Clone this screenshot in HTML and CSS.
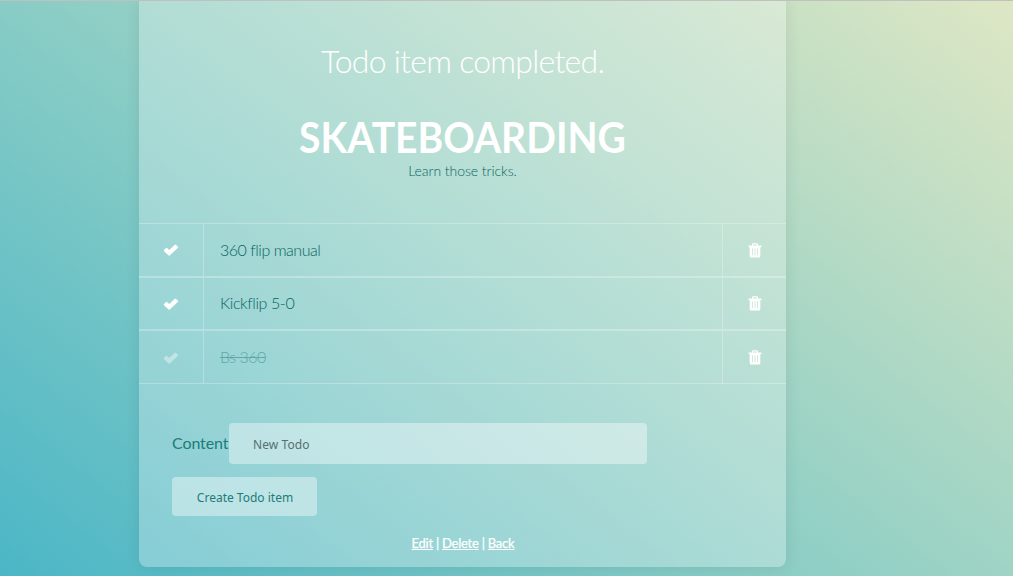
FILE: index.html
```html
<!DOCTYPE html>
<html lang="en">
<head>
<meta charset="utf-8">
<title>Skateboarding</title>
<link rel="stylesheet" href="styles.css">
</head>
<body>
<svg width="0" height="0" class="defs">
  <symbol id="check" viewBox="0 0 16 12"><path d="M1 6 L3 4 Q3.5 3.6 4 4 L6.2 6.1 L11.8 0.7 Q12.3 0.3 12.8 0.7 L15 2.7 Q15.5 3.2 15 3.7 L6.8 11.6 Q6.2 12 5.7 11.6 L1 7.2 Q0.5 6.6 1 6 Z"/></symbol>
  <symbol id="trash" viewBox="0 0 14 15"><path fill-rule="evenodd" d="M4 2.5V1.6Q4 0.3 5.2 0.3H8.8Q10 0.3 10 1.6V2.5H13.4V4.2H12.3V13Q12.3 14.6 10.8 14.6H3.2Q1.7 14.6 1.7 13V4.2H0.6V2.5ZM5.2 2.5H8.8V1.5H5.2Z"/><path d="M4.5 5.3V12.3M7 5.3V12.3M9.5 5.3V12.3" stroke="#cfe5d8" stroke-width="0.9"/></symbol>
</svg>
<main class="card">
  <p class="notice">Todo item completed.</p>
  <h1 class="title">Skateboarding</h1>
  <p class="description">Learn those tricks.</p>
  <ul class="todos">
    <li class="todo"><a class="action"><svg class="check"><use href="#check"/></svg></a><span class="content">360 flip manual</span><a class="action remove"><svg class="trash"><use href="#trash"/></svg></a></li>
    <li class="todo"><a class="action"><svg class="check"><use href="#check"/></svg></a><span class="content narrow">Kickflip 5-0</span><a class="action remove"><svg class="trash"><use href="#trash"/></svg></a></li>
    <li class="todo done"><a class="action"><svg class="check"><use href="#check"/></svg></a><span class="content">Bs 360</span><a class="action remove"><svg class="trash"><use href="#trash"/></svg></a></li>
  </ul>
  <form class="form">
    <div class="field"><label class="label" for="content">Content</label><input class="input" id="content" placeholder="New Todo"></div>
    <button class="submit" type="button">Create Todo item</button>
  </form>
  <nav class="links"><a class="link" href="#">Edit</a> | <a class="link" href="#">Delete</a> | <a class="link" href="#">Back</a></nav>
</main>
</body>
</html>
```
FILE: styles.css
```css
* { box-sizing: border-box; }
body {
  margin: 0;
  height: 576px;
  overflow: hidden;
  border-top: 1px solid #c0c0c0;
  background: linear-gradient(38deg, #4bb6c6, #93d0c5 50%, #dee7c4) no-repeat;
  font-family: Lato, sans-serif;
  color: #1c7c76;
}
.defs { position: absolute; }
.card {
  width: 647px;
  height: 566px;
  margin-left: 139px;
  padding-top: 37px;
  border-radius: 0 0 8px 8px;
  background: rgba(255, 255, 255, .28);
  box-shadow: 0 0 16px rgba(0, 0, 0, .09);
}
.notice { margin: 0; height: 46px; line-height: 46px; font-size: 32px; font-weight: 300; letter-spacing: -.75px; color: #fff; text-align: center; }
.title { margin: 27px 0 0; height: 50px; line-height: 52px; font-size: 42px; font-weight: 700; transform: scaleX(.93); text-transform: uppercase; color: #fff; text-align: center; }
.description { margin: 0; height: 20px; line-height: 20px; font-size: 14px; font-weight: 300; letter-spacing: -.05px; text-align: center; color: #08655f; }
.todos { margin: 42px 0 0; padding: 0; list-style: none; }
.todo {
  display: flex;
  height: 53.67px;
  border: solid rgba(255, 255, 255, .27);
  border-width: 1px 0;
}
.action { display: flex; width: 65px; align-items: center; justify-content: center; border-right: 1px solid rgba(255, 255, 255, .27); }
.remove { width: 64px; border-right: 0; border-left: 1px solid rgba(255, 255, 255, .27); }
.content { flex: 1; padding-left: 16px; line-height: 51px; font-size: 16px; font-weight: 300; letter-spacing: -.47px; color: #08655f; }
.narrow { letter-spacing: -.4px; line-height: 49px; }
.check { width: 16px; height: 12px; margin-top: 1px; fill: #fff; }
.trash { width: 14px; height: 15px; margin-top: 1px; fill: #fff; }
.done .check { opacity: .4; }
.done .content { opacity: .4; text-decoration: line-through; }
.form { padding: 39px 33px 0; }
.field { display: flex; align-items: center; height: 41px; }
.label { width: 57px; padding-bottom: 2px; font-size: 16px; letter-spacing: -.1px; white-space: nowrap; }
.input { width: 418px; height: 41px; padding: 2px 24px 0; border: 0; border-radius: 4px; background: rgba(255, 255, 255, .4); font: 12px "Noto Sans", sans-serif; letter-spacing: .08px; }
.input::placeholder { color: #55706f; opacity: 1; }
.submit { display: block; width: 145px; height: 39px; margin-top: 13px; padding: 2px 0 0 1px; border: 0; border-radius: 4px; background: rgba(255, 255, 255, .4); color: #1c7c76; font: 12px "Noto Sans", sans-serif; }
.links { margin-top: 18px; padding-left: 1px; line-height: 18px; font-size: 13px; letter-spacing: -.25px; text-align: center; color: #fff; -webkit-text-stroke: .25px #fff; }
.link { color: #fff; }
```
